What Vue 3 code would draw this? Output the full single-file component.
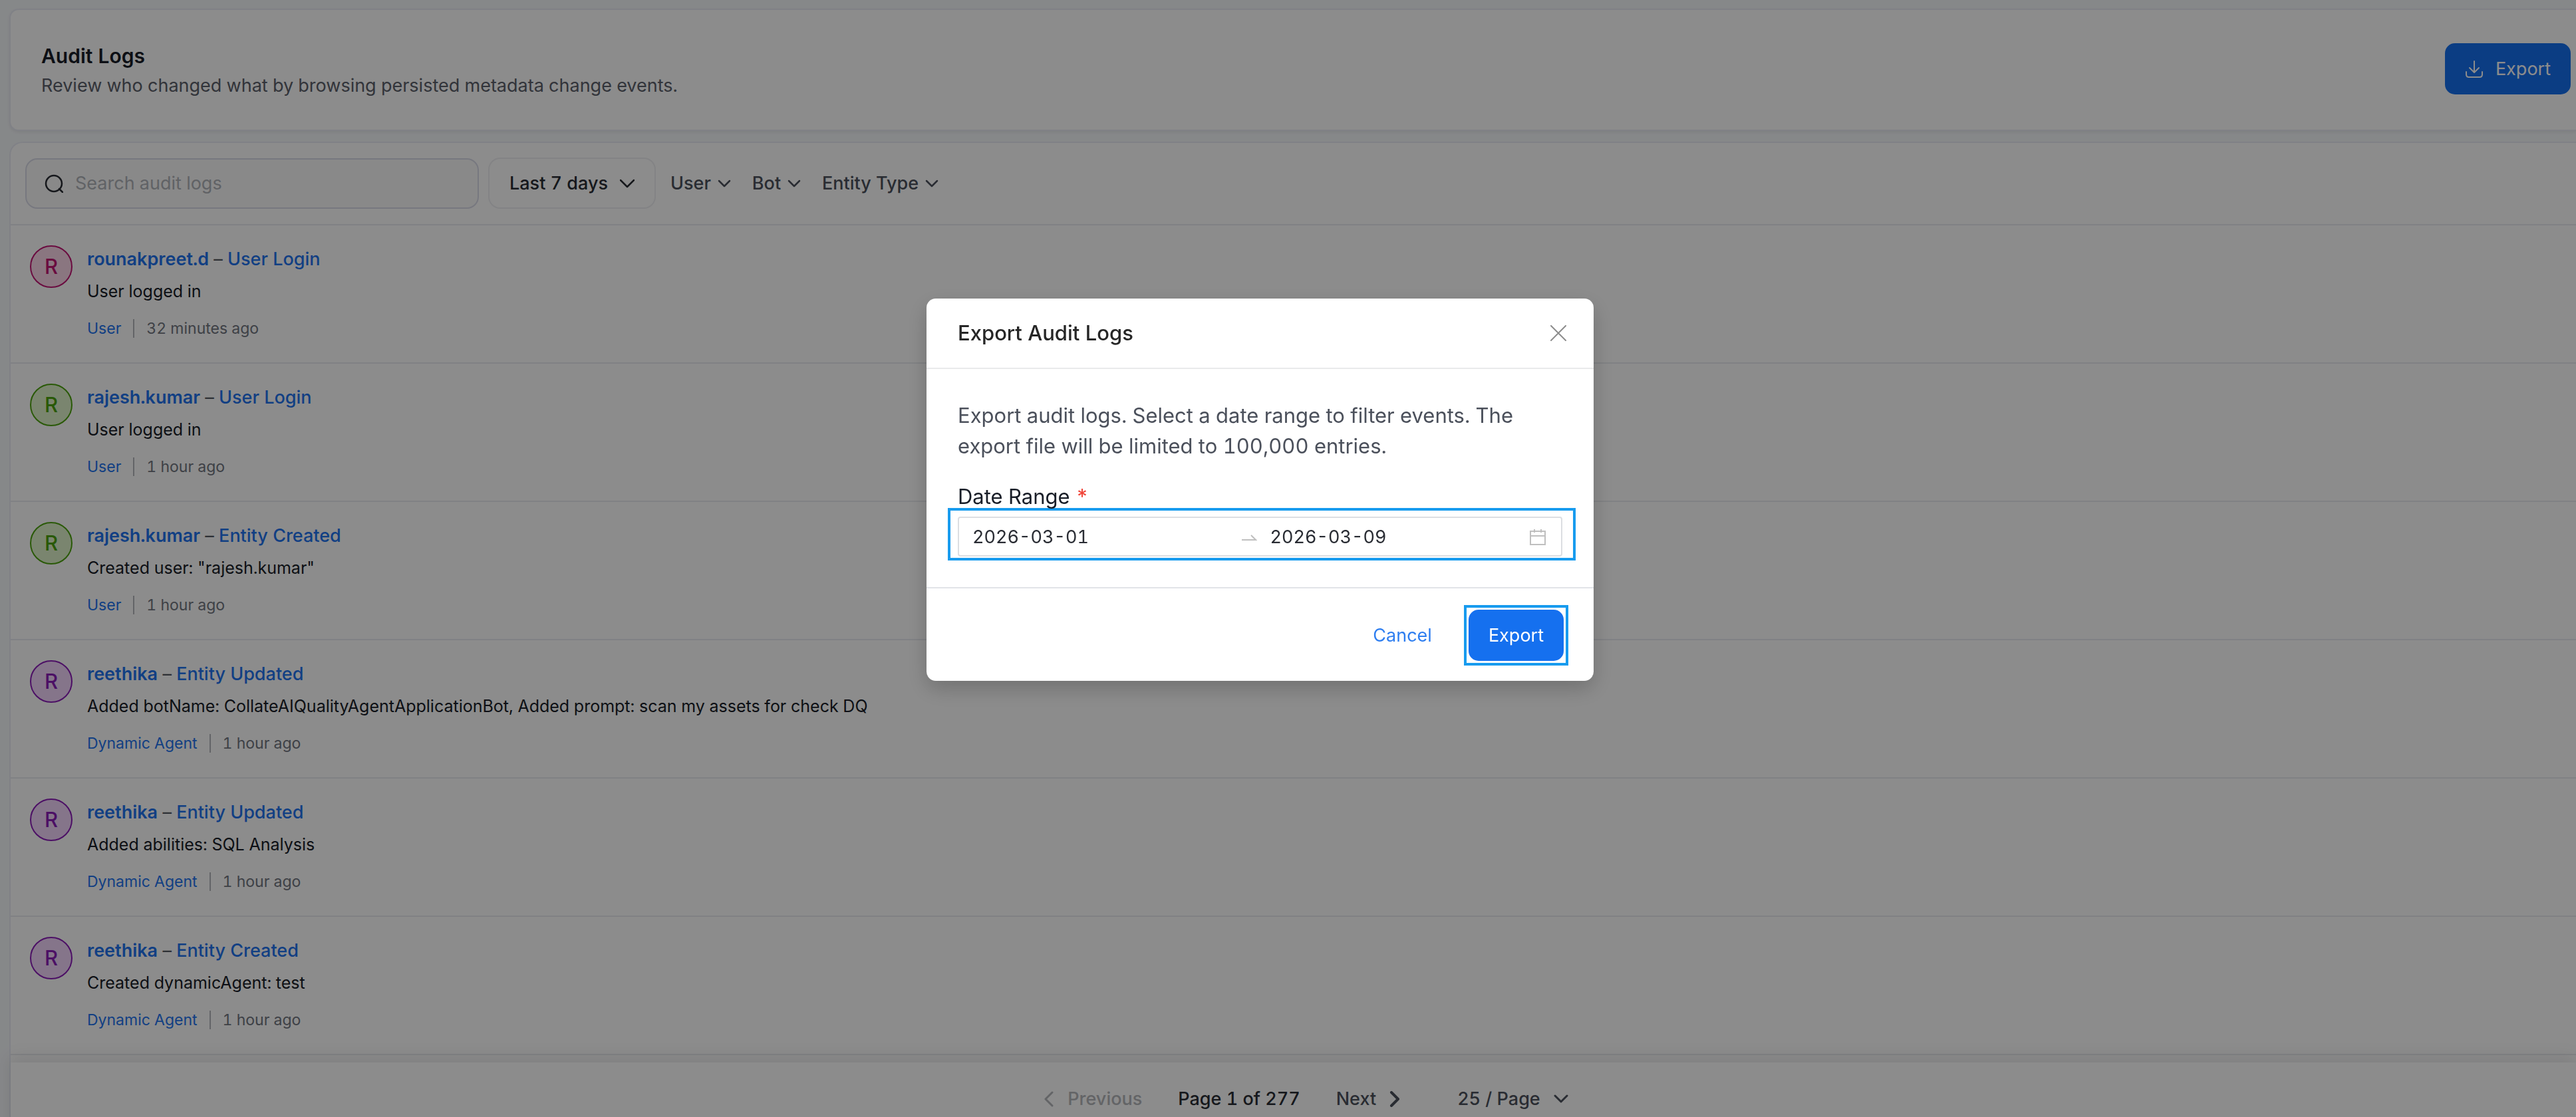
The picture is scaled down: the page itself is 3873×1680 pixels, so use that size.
<script setup>
const filters = ['User', 'Bot', 'Entity Type']
const logs = [
  { user: 'rounakpreet.d', action: 'User Login', text: 'User logged in', type: 'User', time: '32 minutes ago', tone: 'pink' },
  { user: 'rajesh.kumar', action: 'User Login', text: 'User logged in', type: 'User', time: '1 hour ago', tone: 'green' },
  { user: 'rajesh.kumar', action: 'Entity Created', text: 'Created user: "rajesh.kumar"', type: 'User', time: '1 hour ago', tone: 'green' },
  { user: 'reethika', action: 'Entity Updated', text: 'Added botName: CollateAIQualityAgentApplicationBot, Added prompt: scan my assets for check DQ', type: 'Dynamic Agent', time: '1 hour ago', tone: 'purple' },
  { user: 'reethika', action: 'Entity Updated', text: 'Added abilities: SQL Analysis', type: 'Dynamic Agent', time: '1 hour ago', tone: 'purple' },
  { user: 'reethika', action: 'Entity Created', text: 'Created dynamicAgent: test', type: 'Dynamic Agent', time: '1 hour ago', tone: 'purple' },
]
</script>

<template>
  <div class="page">
    <header class="card page-header">
      <div class="heading">
        <h1>Audit Logs</h1>
        <p>Review who changed what by browsing persisted metadata change events.</p>
      </div>
      <button class="btn-primary header-export" type="button">
        <svg width="28" height="28" viewBox="0 0 28 28" fill="none" stroke="currentColor" stroke-width="2" stroke-linecap="round" stroke-linejoin="round">
          <path d="M14 2v16M7 12l7 7 7-7M2 18v4q0 4 4 4h16q4 0 4-4v-4" />
        </svg>
        Export
      </button>
    </header>

    <main class="card">
      <div class="toolbar">
        <label class="search">
          <svg width="28" height="28" viewBox="0 0 28 28" fill="none" stroke="currentColor" stroke-width="2.5" stroke-linecap="round">
            <circle cx="14" cy="14" r="12" /><path d="M22 22l5 5" />
          </svg>
          <input type="text" placeholder="Search audit logs" aria-label="Search audit logs" />
        </label>
        <button class="range-btn" type="button">
          Last 7 days
          <svg width="22" height="14" viewBox="0 0 22 14" fill="none" stroke="currentColor" stroke-width="2.5" stroke-linecap="round" stroke-linejoin="round"><path d="M1 2l10 10 10-10" /></svg>
        </button>
        <div class="filters">
          <button v-for="f in filters" :key="f" type="button">
            {{ f }}
            <svg width="20" height="12" viewBox="0 0 20 12" fill="none" stroke="currentColor" stroke-width="2.5" stroke-linecap="round" stroke-linejoin="round"><path d="M2 2l8 8 8-8" /></svg>
          </button>
        </div>
      </div>

      <article v-for="(log, i) in logs" :key="i" class="log">
        <span class="avatar" :class="log.tone">R</span>
        <div>
          <div class="log-title">
            <a href="#" class="user">{{ log.user }}</a> <span>–</span> <a href="#">{{ log.action }}</a>
          </div>
          <div class="log-text">{{ log.text }}</div>
          <div class="log-meta">
            <a href="#">{{ log.type }}</a>
            <i class="sep"></i>
            <span>{{ log.time }}</span>
          </div>
        </div>
      </article>

      <nav class="pagination" aria-label="Pagination">
        <button type="button" class="prev" disabled>
          <svg width="16" height="24" viewBox="0 0 16 24" fill="none" stroke="currentColor" stroke-width="3" stroke-linecap="round" stroke-linejoin="round"><path d="M13 2L3 12l10 10" /></svg>
          Previous
        </button>
        <span class="current">Page 1 of 277</span>
        <button type="button" class="next">
          Next
          <svg width="16" height="24" viewBox="0 0 16 24" fill="none" stroke="currentColor" stroke-width="4" stroke-linecap="round" stroke-linejoin="round"><path d="M3 2l10 10L3 22" /></svg>
        </button>
        <button type="button" class="size">
          25 / Page
          <svg width="22" height="14" viewBox="0 0 22 14" fill="none" stroke="currentColor" stroke-width="3" stroke-linecap="round" stroke-linejoin="round"><path d="M2 2l9 9 9-9" /></svg>
        </button>
      </nav>
    </main>

    <div class="mask">
      <section class="modal" role="dialog" aria-labelledby="export-title">
        <div class="modal-head">
          <h2 id="export-title">Export Audit Logs</h2>
          <button class="close" type="button" aria-label="Close">
            <svg width="24" height="24" viewBox="0 0 24 24" fill="none" stroke="currentColor" stroke-width="2" stroke-linecap="round"><path d="M1 1l22 22M23 1L1 23" /></svg>
          </button>
        </div>
        <div class="modal-body">
          <p>Export audit logs. Select a date range to filter events. The export file will be limited to 100,000 entries.</p>
          <label class="field-label" for="start-date">Date Range <span>*</span></label>
          <div class="highlight range-highlight">
            <div class="range">
              <input id="start-date" type="text" value="2026-03-01" />
              <svg class="arrow" width="24" height="14" viewBox="0 0 24 14" fill="none" stroke="currentColor" stroke-width="2"><path d="M1 11h21l-7-7" /></svg>
              <input type="text" value="2026-03-09" aria-label="End date" />
              <svg width="26" height="26" viewBox="0 0 26 26" fill="none" stroke="currentColor" stroke-width="2"><path d="M2 4h22v20H2zM2 11h22M8 1v5M18 1v5" /></svg>
            </div>
          </div>
        </div>
        <div class="modal-foot">
          <button class="cancel" type="button">Cancel</button>
          <div class="highlight"><button class="btn-primary" type="button">Export</button></div>
        </div>
      </section>
    </div>
  </div>
</template>

<style>
body {
  background: #f5f7fa;
}
</style>

<style scoped>
.page {
  box-sizing: border-box;
  height: 100vh;
  overflow: hidden;
  padding: 13px 0 0 14px;
  font-family: Inter, sans-serif;
  font-size: 27px;
  line-height: 40px;
  font-variant-numeric: tabular-nums;
  color: #4b505b;
}
.page * {
  box-sizing: border-box;
}
h1, h2, p {
  margin: 0;
}
button {
  font: inherit;
  font-variant-numeric: inherit;
  color: inherit;
  background: none;
  border: 0;
  padding: 0;
  display: flex;
  align-items: center;
}
a {
  color: #1f74ee;
  text-decoration: none;
}
svg {
  flex: none;
}
.card {
  background: #fff;
  border: 2px solid #eaecf5;
  border-right: 0;
  border-radius: 20px 0 0 20px;
}
.page-header {
  display: flex;
  align-items: center;
  justify-content: space-between;
  height: 184px;
  padding: 0 8px 3px 46px;
  margin-bottom: 16px;
  border-radius: 14px 0 0 14px;
  box-shadow: 0 2px 4px #0a0d1210;
}
.heading {
  padding-top: 6px;
}
h1 {
  font-size: 30px;
  line-height: 44px;
  font-weight: 600;
  color: #181d27;
}
.page-header p {
  line-height: 46px;
  color: #5b606a;
}
.btn-primary {
  justify-content: center;
  height: 77px;
  padding: 0 30px;
  border-radius: 15px;
  background: #1570ef;
  color: #fff;
}
.header-export {
  gap: 18px;
}
.toolbar {
  display: flex;
  align-items: center;
  height: 124px;
  padding: 0 22px 1px;
  border-bottom: 2px solid #eaecf0;
}
.search {
  display: flex;
  align-items: center;
  gap: 18px;
  width: 682px;
  height: 76px;
  padding: 0 27px;
  border: 2px solid #d9dbe8;
  border-radius: 18px;
  background: #fafafa;
  color: #292c33;
}
input {
  flex: 1;
  min-width: 0;
  border: 0;
  outline: 0;
  padding: 0;
  background: none;
  font: inherit;
  font-variant-numeric: inherit;
  color: #292c33;
}
.search input::placeholder {
  color: #b0b3b9;
}
.range-btn {
  gap: 18px;
  height: 77px;
  margin: 0 22px 0 14px;
  padding: 0 30px;
  border: 2px solid #eeeff2;
  border-radius: 18px;
  font-weight: 500;
  color: #292c33;
}
.filters {
  display: flex;
  gap: 32px;
  font-weight: 500;
}
.filters button {
  gap: 10px;
}
.log {
  display: flex;
  gap: 22px;
  height: 208px;
  padding: 30px 29px 0;
  border-bottom: 2px solid #eaecf0;
}
.avatar {
  width: 64px;
  height: 64px;
  border: 2px solid;
  border-radius: 50%;
  font-size: 31px;
  line-height: 60px;
  font-weight: 500;
  text-align: center;
}
.pink {
  color: #c11574;
  background: #fcd8ea;
}
.green {
  color: #4ca30d;
  background: #def2cb;
}
.purple {
  color: #8a1cb8;
  background: #f2d6fb;
}
.log-title {
  line-height: 42px;
  font-weight: 500;
}
.log-title .user {
  font-weight: 600;
}
.log-title span {
  font-weight: 400;
  color: #535862;
}
.log-text {
  margin-top: 7px;
  font-size: 25px;
  color: #181d27;
}
.log-meta {
  display: flex;
  align-items: center;
  margin-top: 16px;
  font-size: 23px;
  color: #717680;
}
.sep {
  width: 2px;
  height: 28px;
  margin: 0 18px;
  background: #b5b7bc;
}
.pagination {
  display: flex;
  align-items: center;
  justify-content: center;
  height: 110px;
  margin-top: 11px;
  padding-left: 38px;
  font-weight: 500;
  box-shadow: 0 -8px 24px #0a0d1218;
}
.prev {
  gap: 20px;
  color: #b4b6bb;
}
.current {
  margin: 0 54px;
  color: #292c33;
}
.next {
  gap: 20px;
}
.size {
  gap: 20px;
  margin-left: 86px;
}
.mask {
  position: fixed;
  inset: 0;
  background: rgba(0, 0, 0, .45);
}
.modal {
  width: 1003px;
  margin: 449px auto 0 1393px;
  border-radius: 14px;
  background: #fff;
  box-shadow: 0 12px 32px #0003;
}
.modal-head {
  display: flex;
  align-items: center;
  justify-content: space-between;
  height: 106px;
  padding: 0 41px 0 47px;
  border-bottom: 2px solid #e9eaeb;
}
h2 {
  font-size: 31px;
  font-weight: 500;
  color: #262626;
}
.close {
  color: #8c8c8c;
}
.modal-body {
  padding: 47px 47px 40px;
  font-size: 31px;
  line-height: 46px;
  border-bottom: 2px solid #e2e4e8;
}
.field-label {
  display: block;
  margin-top: 30px;
  color: #181d27;
}
.field-label span {
  color: #f04438;
}
.highlight {
  border: 4px solid #189bee;
}
.range-highlight {
  margin: -6px -20px 0 -15px;
  padding: 9px 16px 2px 11px;
}
.range {
  display: flex;
  align-items: center;
  height: 60px;
  padding: 1px 22px 0 20px;
  border: 2px solid #dcdee2;
  border-radius: 4px;
  font-size: 27px;
  color: #bfbfbf;
}
.arrow {
  margin: 0 20px 0 14px;
}
.modal-foot {
  display: flex;
  align-items: center;
  justify-content: flex-end;
  gap: 48px;
  padding: 25px 38px 23px;
}
.modal-foot .highlight {
  padding: 3px;
}
.cancel {
  color: #2e7ef0;
}
</style>
